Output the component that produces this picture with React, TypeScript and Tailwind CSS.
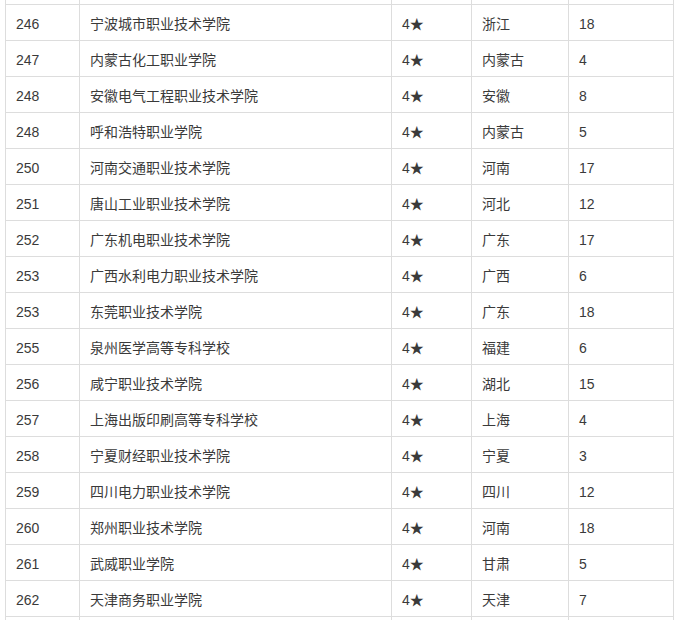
import React from 'react';

type Row = { rank: string; name: string; star: string; province: string; count: string };

const rows: Row[] = [
  { rank: '246', name: '宁波城市职业技术学院', star: '4★', province: '浙江', count: '18' },
  { rank: '247', name: '内蒙古化工职业学院', star: '4★', province: '内蒙古', count: '4' },
  { rank: '248', name: '安徽电气工程职业技术学院', star: '4★', province: '安徽', count: '8' },
  { rank: '248', name: '呼和浩特职业学院', star: '4★', province: '内蒙古', count: '5' },
  { rank: '250', name: '河南交通职业技术学院', star: '4★', province: '河南', count: '17' },
  { rank: '251', name: '唐山工业职业技术学院', star: '4★', province: '河北', count: '12' },
  { rank: '252', name: '广东机电职业技术学院', star: '4★', province: '广东', count: '17' },
  { rank: '253', name: '广西水利电力职业技术学院', star: '4★', province: '广西', count: '6' },
  { rank: '253', name: '东莞职业技术学院', star: '4★', province: '广东', count: '18' },
  { rank: '255', name: '泉州医学高等专科学校', star: '4★', province: '福建', count: '6' },
  { rank: '256', name: '咸宁职业技术学院', star: '4★', province: '湖北', count: '15' },
  { rank: '257', name: '上海出版印刷高等专科学校', star: '4★', province: '上海', count: '4' },
  { rank: '258', name: '宁夏财经职业技术学院', star: '4★', province: '宁夏', count: '3' },
  { rank: '259', name: '四川电力职业技术学院', star: '4★', province: '四川', count: '12' },
  { rank: '260', name: '郑州职业技术学院', star: '4★', province: '河南', count: '18' },
  { rank: '261', name: '武威职业学院', star: '4★', province: '甘肃', count: '5' },
  { rank: '262', name: '天津商务职业学院', star: '4★', province: '天津', count: '7' },
];

const cell = 'border border-[#dddddd] pl-[10px] pr-2 pt-[4px] h-[36px] align-middle whitespace-nowrap';

export default function App() {
  return (
    <div
      className="h-[620px] overflow-hidden bg-white pl-[5px] text-[14px] text-[#3a3a3a]"
      style={{ fontFamily: '"Liberation Sans", Arial, "Noto Sans CJK SC", sans-serif' }}
    >
      <table className="-mt-[32px] w-[668px] table-fixed border-collapse">
        <colgroup>
          <col className="w-[74px]" />
          <col className="w-[312px]" />
          <col className="w-[80px]" />
          <col className="w-[97px]" />
          <col className="w-[105px]" />
        </colgroup>
        <tbody>
          {/* row above, cut off by the top edge */}
          <tr>
            <td className={cell}></td>
            <td className={cell}></td>
            <td className={cell}></td>
            <td className={cell}></td>
            <td className={cell}></td>
          </tr>
          {rows.map((r, i) => (
            <tr key={i}>
              <td className={cell}>{r.rank}</td>
              <td className={cell}>{r.name}</td>
              <td className={cell}>{r.star}</td>
              <td className={cell}>{r.province}</td>
              <td className={cell}>{r.count}</td>
            </tr>
          ))}
          <tr>
            <td className={cell}></td>
            <td className={cell}></td>
            <td className={cell}></td>
            <td className={cell}></td>
            <td className={cell}></td>
          </tr>
        </tbody>
      </table>
    </div>
  );
}
